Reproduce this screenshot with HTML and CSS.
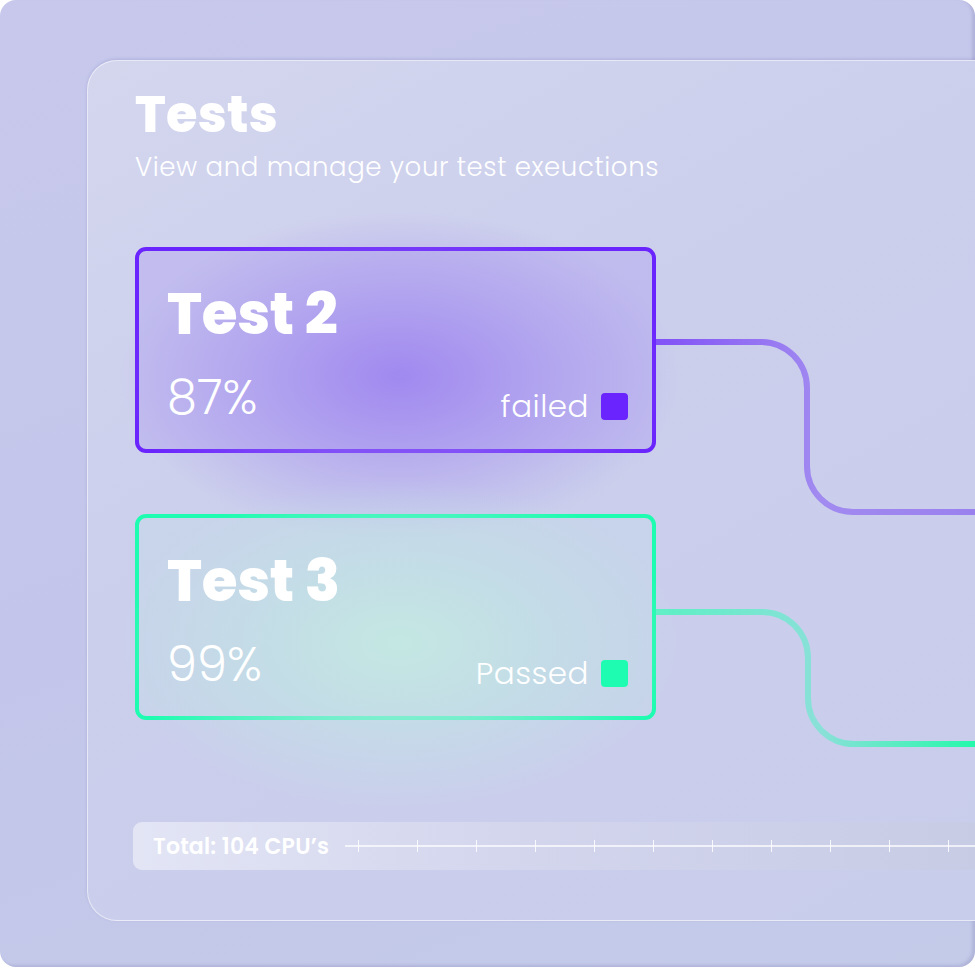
FILE: index.html
```html
<!DOCTYPE html>
<html lang="en">
<head>
<meta charset="UTF-8">
<meta name="viewport" content="width=device-width, initial-scale=1.0">
<title>Tests</title>
<link rel="stylesheet" href="styles.css">
</head>
<body>

<div class="frame">
  <div class="panel">
    <h1 class="title">Tests</h1>
    <p class="subtitle">View and manage your test exeuctions</p>

    <div class="board">
      <svg class="links" width="330" height="520" viewBox="0 0 330 520">
        <defs>
          <linearGradient id="purpleLine" x1="0" y1="0" x2="330" y2="0" gradientUnits="userSpaceOnUse">
            <stop offset="0" stop-color="#8150f7"/>
            <stop offset="0.5" stop-color="#a18af0"/>
            <stop offset="1" stop-color="#9a80ee"/>
          </linearGradient>
          <linearGradient id="greenLine" x1="0" y1="0" x2="330" y2="0" gradientUnits="userSpaceOnUse">
            <stop offset="0" stop-color="#5cf0c4"/>
            <stop offset="0.5" stop-color="#8ae0d8"/>
            <stop offset="1" stop-color="#1ffaa8"/>
          </linearGradient>
        </defs>
        <!-- failed -> next -->
        <path d="M0 95 H106 A46 46 0 0 1 152 141 V219 A46 46 0 0 0 198 265 H330" fill="none" stroke="url(#purpleLine)" stroke-width="6"/>
        <!-- passed -> next -->
        <path d="M0 365 H107 A46 46 0 0 1 153 411 V451 A46 46 0 0 0 199 497 H330" fill="none" stroke="url(#greenLine)" stroke-width="6"/>
      </svg>

      <div class="test failed">
        <div class="glow"></div>
        <h2>Test 2</h2>
        <div class="row">
          <span class="score">87%</span>
          <span class="status">failed <i class="dot"></i></span>
        </div>
      </div>

      <div class="test passed">
        <div class="glow"></div>
        <h2>Test 3</h2>
        <div class="row">
          <span class="score">99%</span>
          <span class="status">Passed <i class="dot"></i></span>
        </div>
      </div>
    </div>

    <div class="total">
      <span class="total-label">Total: 104 CPU’s</span>
      <div class="scale">
        <i></i><i></i><i></i><i></i><i></i><i></i><i></i><i></i><i></i><i></i><i></i>
      </div>
    </div>
  </div>
</div>

</body>
</html>
```

FILE: styles.css
```css
/* Tests dashboard */
body {
  margin: 0;
  background: #ffffff;
  font-family: "Poppins", Inter, "Noto Sans", sans-serif;
  color: #ffffff;
}
.frame {
  width: 975px;
  height: 967px;
  border-radius: 16px;
  overflow: hidden;
  background: linear-gradient(160deg, #c7c8ec 0%, #c3c6ea 50%, #c4cbe9 100%);
  box-shadow: inset -3px -2px 3px rgba(120, 120, 170, 0.25);
  padding: 60px 0 0 87px;
  box-sizing: border-box;
}
.panel {
  width: 960px;
  height: 861px;
  box-sizing: border-box;
  border-radius: 30px;
  border: 1px solid rgba(255, 255, 255, 0.55);
  background: linear-gradient(150deg, #d4d6ee 0%, #cbcfec 40%, #c9cdec 100%);
  box-shadow: 0 -1px 3px rgba(110, 110, 170, 0.25);
  padding: 22px 0 0 47px;
}
.title {
  margin: 0;
  font-size: 51px;
  font-weight: 800;
  line-height: 62px;
  letter-spacing: 0.3px;
}
.subtitle {
  margin: 5px 0 0;
  font-size: 26px;
  font-weight: 300;
  line-height: 34px;
  letter-spacing: 0.6px;
}
.board {
  position: relative;
  margin-top: 63px;
  display: flex;
  flex-direction: column;
  gap: 61px;
}
.links {
  position: absolute;
  left: 520px;
  top: 0;
}
.test {
  position: relative;
  width: 521px;
  height: 206px;
  box-sizing: border-box;
  border-radius: 11px;
  border: 4px solid;
  padding: 28px 24px 0 28px;
}
.test .glow {
  position: absolute;
  left: -20px;
  top: -40px;
  width: 560px;
  height: 330px;
  pointer-events: none;
}
.failed {
  border-color: #6a24fd;
  background: rgba(180, 168, 240, 0.5);
}
.failed .glow {
  background: radial-gradient(closest-side, rgba(150, 120, 240, 0.75) 0%, rgba(160, 135, 240, 0.45) 50%, rgba(180, 170, 240, 0) 100%);
}
.passed {
  border-color: #1dfcb0;
  background: rgba(195, 220, 232, 0.4);
}
.passed .glow {
  background: radial-gradient(closest-side, rgba(195, 235, 225, 0.85) 0%, rgba(192, 228, 228, 0.55) 50%, rgba(190, 215, 235, 0) 100%);
}
.test h2 {
  position: relative;
  margin: 0;
  font-size: 58px;
  font-weight: 800;
  line-height: 70px;
  letter-spacing: -0.3px;
}
.row {
  position: relative;
  display: flex;
  justify-content: space-between;
  align-items: flex-end;
  margin-top: 22px;
}
.score {
  font-size: 48px;
  font-weight: 300;
  line-height: 54px;
}
.status {
  display: flex;
  align-items: center;
  gap: 12px;
  font-size: 31px;
  font-weight: 300;
  line-height: 38px;
  letter-spacing: 0.5px;
}
.dot {
  width: 27px;
  height: 27px;
  border-radius: 4px;
}
.failed .dot {
  background: #6a24fd;
}
.passed .dot {
  background: #1dfcb0;
}
.total {
  margin-top: 102px;
  height: 48px;
  border-radius: 9px;
  background: linear-gradient(90deg, rgba(235, 237, 248, 0.75) 0%, rgba(220, 222, 238, 0.5) 40%, rgba(195, 200, 222, 0.6) 100%);
  display: flex;
  align-items: center;
  padding-left: 20px;
  margin-left: -2px;
}
.total-label {
  font-size: 22px;
  font-weight: 600;
  letter-spacing: 0.2px;
  white-space: nowrap;
}
.scale {
  position: relative;
  flex: 1;
  height: 12px;
  margin-left: 16px;
  display: flex;
  padding-left: 13px;
}
.scale::before {
  content: "";
  position: absolute;
  left: 0;
  right: 0;
  top: 5px;
  height: 2px;
  background: rgba(255, 255, 255, 0.7);
}
.scale i {
  width: 1px;
  height: 12px;
  margin-right: 58px;
  background: rgba(255, 255, 255, 0.85);
  flex: none;
}
```
